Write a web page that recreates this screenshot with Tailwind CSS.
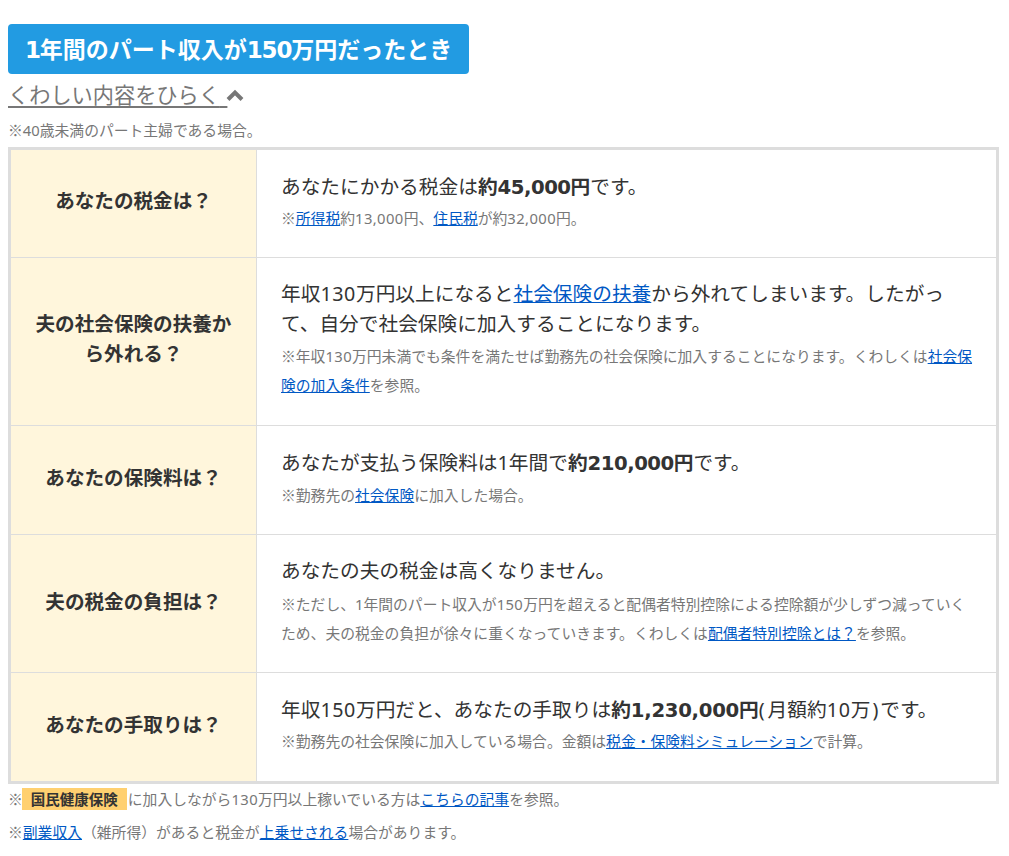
<!DOCTYPE html>
<html lang="ja"><head><meta charset="utf-8"><script src="https://cdn.jsdelivr.net/npm/@tailwindcss/browser@4"></script></head>
<body class="bg-white text-[#333] font-['Noto_Sans','Noto_Sans_CJK_JP',sans-serif] overflow-hidden">
<div class="w-[1009px] h-[856px] pl-2 pr-3 pt-6 overflow-hidden">
<div class="inline-block bg-[#229be2] text-white font-bold text-[23px] leading-[50px] h-[50px] px-[17px] rounded-[4px] align-top"><span class="font-['DejaVu_Sans'] tracking-[-1.2px]">1</span>年間のパート収入が<span class="font-['DejaVu_Sans'] tracking-[-1.2px]">150</span>万円だったとき</div>
<div class="mt-[6px] flex items-center text-[#777] text-[21.2px] leading-[30px] h-[30px]"><span class="underline decoration-2 underline-offset-[3px] whitespace-pre">くわしい内容をひらく<span class="tracking-[2px]">&nbsp;</span></span><svg class="w-[20px] h-[14px] ml-[-2px]" viewBox="0 0 20 14"><path d="M3 11.5 L10 4.5 L17 11.5" fill="none" stroke="#777" stroke-width="4"/></svg></div>
<p class="mt-[8px] text-[14.8px] leading-[24px] text-[#777]"><span class="font-['Noto_Sans_CJK_JP']">※</span>40歳未満のパート主婦である場合。</p>
<div class="mt-[5px] border-[3px] border-[#ddd] w-[991px]">
<div class="flex border-b border-[#ddd] h-[108px]"><div class="w-[246px] bg-[#fff6dc] border-r border-[#ddd] flex items-center justify-center font-bold text-[19.6px] px-5 pb-[5px] text-center">あなたの税金は？</div><div class="flex-1 pl-6 pr-6 pb-[3px] flex flex-col justify-center"><p class="text-[19.7px] leading-[30px]">あなたにかかる税金は<b>約<span class="font-['DejaVu_Sans'] tracking-[-0.5px]">45,000</span>円</b>です。</p><p class="text-[14.8px] leading-[29px] text-[#777]"><span class="font-['Noto_Sans_CJK_JP']">※</span><a class="text-[#0058c4] underline">所得税</a>約<span class="tracking-[0.4px]">13,000</span>円、<a class="text-[#0058c4] underline">住民税</a>が約<span class="tracking-[0.4px]">32,000</span>円。</p></div></div>
<div class="flex border-b border-[#ddd] h-[168px]"><div class="w-[246px] bg-[#fff6dc] border-r border-[#ddd] flex items-center justify-center font-bold text-[19.6px] leading-[30px] px-5 pb-[5px] text-center">夫の社会保険の扶養から外れる？</div><div class="flex-1 pl-6 pr-6 pb-[4px] flex flex-col justify-center"><p class="text-[19.7px] leading-[30px]">年収<span class="tracking-[0.6px]">130</span>万円以上になると<a class="text-[#0058c4] underline">社会保険の扶養</a>から外れてしまいます。したがって、自分で社会保険に加入することになります。</p><p class="mt-[2px] mr-[-4px] text-[14.8px] leading-[29px] text-[#777]"><span class="font-['Noto_Sans_CJK_JP']">※</span>年収<span class="tracking-[0.4px]">130</span>万円未満でも条件を満たせば勤務先の社会保険に加入することになります。くわしくは<a class="text-[#0058c4] underline">社会保険の加入条件</a>を参照。</p></div></div>
<div class="flex border-b border-[#ddd] h-[109px]"><div class="w-[246px] bg-[#fff6dc] border-r border-[#ddd] flex items-center justify-center font-bold text-[19.6px] px-5 pb-[4px] text-center">あなたの保険料は？</div><div class="flex-1 pl-6 pr-6 pb-[3px] flex flex-col justify-center"><p class="text-[19.7px] leading-[30px]">あなたが支払う保険料は1年間で<b>約<span class="font-['DejaVu_Sans'] tracking-[-0.5px]">210,000</span>円</b>です。</p><p class="mt-[1px] text-[14.8px] leading-[29px] text-[#777]"><span class="font-['Noto_Sans_CJK_JP']">※</span>勤務先の<a class="text-[#0058c4] underline">社会保険</a>に加入した場合。</p></div></div>
<div class="flex border-b border-[#ddd] h-[138px]"><div class="w-[246px] bg-[#fff6dc] border-r border-[#ddd] flex items-center justify-center font-bold text-[19.6px] px-5 pb-[3px] text-center">夫の税金の負担は？</div><div class="flex-1 pl-6 pr-6 pb-[4px] flex flex-col justify-center"><p class="text-[19.7px] leading-[30px]">あなたの夫の税金は高くなりません。</p><p class="mt-[3px] text-[14.8px] leading-[29px] text-[#777]"><span class="font-['Noto_Sans_CJK_JP']">※</span>ただし、1年間のパート収入が<span class="tracking-[0.4px]">150</span>万円を超えると配偶者特別控除による控除額が少しずつ減っていくため、夫の税金の負担が徐々に重くなっていきます。くわしくは<a class="text-[#0058c4] underline">配偶者特別控除とは？</a>を参照。</p></div></div>
<div class="flex h-[108px]"><div class="w-[246px] bg-[#fff6dc] border-r border-[#ddd] flex items-center justify-center font-bold text-[19.6px] px-5 pb-[5px] text-center">あなたの手取りは？</div><div class="flex-1 pl-6 pr-6 pb-[3px] flex flex-col justify-center"><p class="text-[19.7px] leading-[30px]">年収<span class="tracking-[0.6px]">150</span>万円だと、あなたの手取りは<b>約<span class="font-['DejaVu_Sans'] tracking-[-0.3px]">1,230,000</span>円</b><span class="tracking-[3px]">(</span>月額約<span class="tracking-[0.8px]">10</span>万<span class="pl-[2px] pr-[2px]">)</span>です。</p><p class="text-[14.8px] leading-[29px] text-[#777]"><span class="font-['Noto_Sans_CJK_JP']">※</span>勤務先の社会保険に加入している場合。金額は<a class="text-[#0058c4] underline">税金・保険料シミュレーション</a>で計算。</p></div></div>
</div>
<p class="mt-[-1px] text-[14.8px] leading-[32px] text-[#777]"><span class="font-['Noto_Sans_CJK_JP']">※</span><span class="inline-block bg-[#ffd070] text-[#333] font-bold text-[14.5px] leading-[22px] px-[9px] ml-[-1px] mr-[1px]">国民健康保険</span>に加入しながら<span class="tracking-[0.4px]">130</span>万円以上稼いでいる方は<a class="text-[#0058c4] underline">こちらの記事</a>を参照。</p>
<p class="mt-[1px] text-[14.8px] leading-[32px] text-[#777]"><span class="font-['Noto_Sans_CJK_JP']">※</span><a class="text-[#0058c4] underline">副業収入</a>（雑所得）があると税金が<a class="text-[#0058c4] underline">上乗せされる</a>場合があります。</p>
</div></body></html>
